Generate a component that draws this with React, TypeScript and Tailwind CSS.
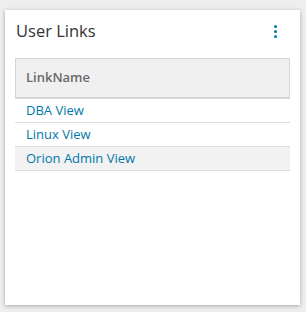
import React from 'react'

const links = ['DBA View', 'Linux View', 'Orion Admin View']

export default function App() {
    return (
        <div className="w-[306px] h-[312px] bg-[#eeeeee] pt-[10px] pl-[5px]" style={{ fontFamily: '"Open Sans", sans-serif' }}>
            <div className="w-[295px] h-[295px] bg-white shadow-[0_1px_4px_rgba(0,0,0,0.3)] px-[10px]">
                <div className="flex items-center justify-between h-[42px]">
                    <h1 className="pl-[1px] text-[16.5px] text-[#333333]">User Links</h1>
                    <button className="mr-[13px] mt-[1px] flex flex-col gap-[2px] items-center">
                        <span className="w-[3px] h-[3px] rounded-full bg-[#0079aa]"></span>
                        <span className="w-[3px] h-[3px] rounded-full bg-[#0079aa]"></span>
                        <span className="w-[3px] h-[3px] rounded-full bg-[#0079aa]"></span>
                    </button>
                </div>
                <div className="mt-[6px]">
                    <div className="h-[41px] flex items-center bg-[#f0f0f0] border border-[#d5d5d5] border-b-2 pl-[10px] text-[13px] font-semibold text-[#6a6a6a]">
                        LinkName
                    </div>
                    {links.map((l, i) => (
                        <div key={l} className={`h-[24px] flex items-center border-b border-[#dddddd] pl-[11px] text-[13px] text-[#0078aa] ${i === 2 ? 'bg-[#f2f2f2]' : ''}`}>
                            {l}
                        </div>
                    ))}
                </div>
            </div>
        </div>
    )
}
